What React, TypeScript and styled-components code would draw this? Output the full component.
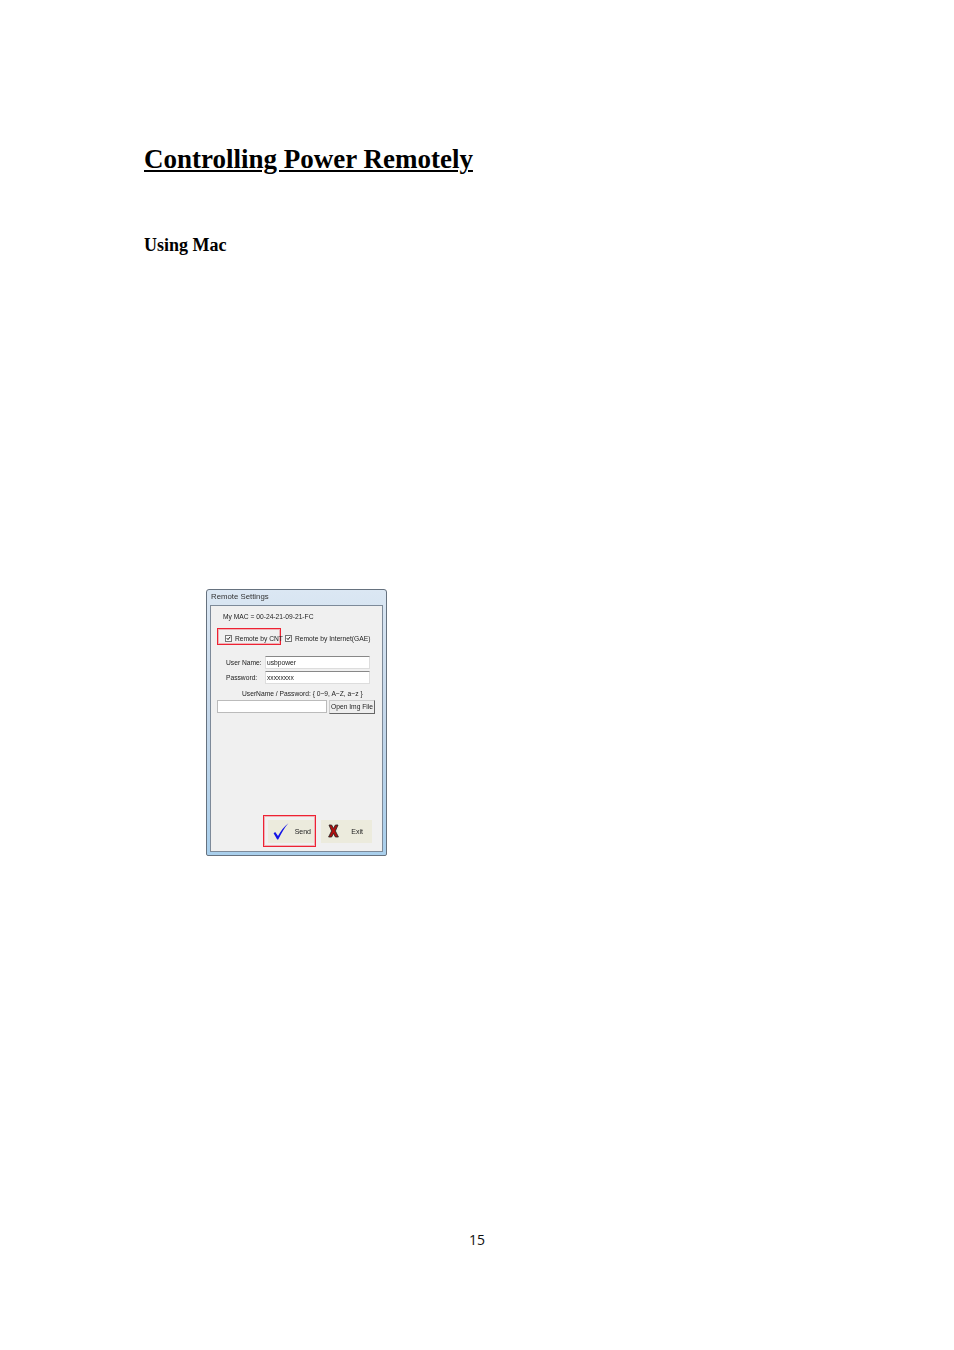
import React from "react";
import styled, { createGlobalStyle } from "styled-components";

const Global = createGlobalStyle`
  html, body { margin: 0; padding: 0; background: #fff; }
`;

const Page = styled.div`
  width: 954px;
  height: 1350px;
  box-sizing: border-box;
  padding: 144px 0 0 144px;
  display: flex;
  flex-direction: column;
  font-family: "Liberation Serif", serif;
  color: #000;
  overflow: hidden;
`;

const Title = styled.h1`
  margin: 0;
  font-size: 27px;
  line-height: 31px;
  font-weight: 700;
  letter-spacing: 0;
  text-decoration: underline;
  text-decoration-thickness: 2px;
  text-underline-offset: 2px;
`;

const Subtitle = styled.h2`
  margin: 59px 0 0;
  font-size: 18px;
  line-height: 22px;
  font-weight: 700;
`;

const Dialog = styled.div`
  margin: 333px 0 0 62px;
  width: 181px;
  height: 267px;
  box-sizing: border-box;
  padding: 0 3px 3px;
  display: flex;
  flex-direction: column;
  background: linear-gradient(180deg, #dbe7f3 0%, #c4d7ea 50%, #a9cfec 100%);
  border: 1px solid #66727f;
  border-radius: 3px 3px 2px 2px;
  font-family: "Liberation Sans", sans-serif;
  font-size: 6.7px;
  color: #222;
  filter: blur(0.25px);
`;

const DialogTitle = styled.div`
  height: 15px;
  line-height: 14px;
  padding-left: 1px;
  font-size: 7.8px;
  color: #333;
  flex: none;
`;

const Panel = styled.div`
  flex: 1;
  display: flex;
  flex-direction: column;
  background: #f0f0f0;
  border: 1px solid #7d8a99;
  padding: 0 6px 4px;
`;

const MacLine = styled.div`
  margin: 6px 0 0 6px;
  line-height: 10px;
  height: 10px;
`;

const CheckRow = styled.div`
  margin-top: 6px;
  display: flex;
  align-items: center;
  gap: 4px;
`;

const Highlight = styled.div<{ $w: number; $h: number; $inset: number }>`
  width: ${(p) => p.$w}px;
  height: ${(p) => p.$h}px;
  box-sizing: border-box;
  border: 1px solid #ee2233;
  box-shadow: inset 0 0 0 1px rgba(238, 34, 51, 0.3);
  padding-left: ${(p) => p.$inset - 1}px;
  display: flex;
  align-items: center;
  flex: none;
`;

const CheckItem = styled.label`
  display: flex;
  align-items: center;
  gap: 3px;
  padding-top: 3px;
  white-space: nowrap;
`;

const Box = styled.span`
  width: 7px;
  height: 7px;
  box-sizing: border-box;
  border: 1px solid #777;
  background: #f8f8f8;
  display: flex;
  flex: none;
`;

const Fields = styled.div`
  margin: 11px 0 0 9px;
  display: grid;
  grid-template-columns: 39px 105px;
  row-gap: 2px;
  align-items: center;
`;

const FieldInput = styled.div`
  height: 13px;
  line-height: 11px;
  box-sizing: border-box;
  padding-left: 1px;
  background: #fff;
  border: 1px solid #ddd;
  border-top-color: #888;
`;

const Hint = styled.div`
  margin: 6px 0 0 25px;
  line-height: 8px;
  height: 8px;
  white-space: nowrap;
`;

const FileRow = styled.div`
  margin-top: 2px;
  display: flex;
  gap: 2px;
`;

const FileInput = styled.div`
  width: 110px;
  height: 13px;
  box-sizing: border-box;
  background: #fff;
  border: 1px solid #bbb;
`;

const FileButton = styled.div`
  width: 46px;
  height: 14px;
  box-sizing: border-box;
  line-height: 12px;
  text-align: center;
  background: #eee;
  border: 1px solid #ccc;
  border-right-color: #666;
  border-bottom-color: #666;
  white-space: nowrap;
`;

const Actions = styled.div`
  margin-top: auto;
  display: flex;
  align-items: center;
  justify-content: flex-end;
  gap: 5px;
  padding-right: 4px;
`;

const ActionButton = styled.div<{ $w: number; $left: number; $right: number }>`
  width: ${(p) => p.$w}px;
  height: 23px;
  box-sizing: border-box;
  padding: 0 ${(p) => p.$right}px 0 ${(p) => p.$left}px;
  display: flex;
  align-items: center;
  justify-content: space-between;
  background: #ecebdd;
  font-size: 7px;
`;

const PageNumber = styled.div`
  position: absolute;
  top: 1231px;
  left: 0;
  width: 954px;
  text-align: center;
  font-family: "Open Sans", "Liberation Sans", sans-serif;
  font-size: 14px;
  line-height: 18px;
  color: #111;
`;

const Tick = () => (
  <svg width="5" height="5" viewBox="0 0 5 5" style={{ display: "block" }}>
    <path d="M0.8 2.2 L2 3.6 L4.2 0.8" fill="none" stroke="#222" strokeWidth="1" />
  </svg>
);

const SendIcon = () => (
  <svg width="16" height="17" viewBox="0 0 16 17">
    <path d="M0.6 10.2 L2.2 9 L5 13 C7.6 8 11 3.6 15.4 0.2 C11.4 4.8 8.4 10 5.2 16.6 L4.2 16.6 Z" fill="#1414e6" />
  </svg>
);

const ExitIcon = () => (
  <svg width="11" height="14" viewBox="0 0 11 14">
    <path d="M1 1 L3.6 1 L5.5 4.4 L7.4 1 L10 1 L7.4 7 L10.4 13 L7.4 13 L5.5 9.4 L3.6 13 L0.6 13 L3.6 7 Z" fill="#b01010" stroke="#222" strokeWidth="0.8" />
  </svg>
);

export default function App() {
  return (
    <Page>
      <Global />
      <Title>Controlling Power Remotely</Title>
      <Subtitle>Using Mac</Subtitle>
      <Dialog>
        <DialogTitle>Remote Settings</DialogTitle>
        <Panel>
          <MacLine>My MAC = 00-24-21-09-21-FC</MacLine>
          <CheckRow>
            <Highlight $w={64} $h={17} $inset={8}>
              <CheckItem>
                <Box><Tick /></Box>
                Remote by CNT
              </CheckItem>
            </Highlight>
            <CheckItem>
              <Box><Tick /></Box>
              Remote by Internet(GAE)
            </CheckItem>
          </CheckRow>
          <Fields>
            <span>User Name:</span>
            <FieldInput>usbpower</FieldInput>
            <span>Password:</span>
            <FieldInput>xxxxxxxx</FieldInput>
          </Fields>
          <Hint>UserName / Password: {"{ 0~9, A~Z, a~z }"}</Hint>
          <FileRow>
            <FileInput />
            <FileButton>Open Img File</FileButton>
          </FileRow>
          <Actions>
            <Highlight $w={53} $h={32} $inset={5}>
              <ActionButton $w={46} $left={5} $right={3}>
                <SendIcon />
                Send
              </ActionButton>
            </Highlight>
            <ActionButton $w={51} $left={7} $right={9}>
              <ExitIcon />
              Exit
            </ActionButton>
          </Actions>
        </Panel>
      </Dialog>
      <PageNumber>15</PageNumber>
    </Page>
  );
}
